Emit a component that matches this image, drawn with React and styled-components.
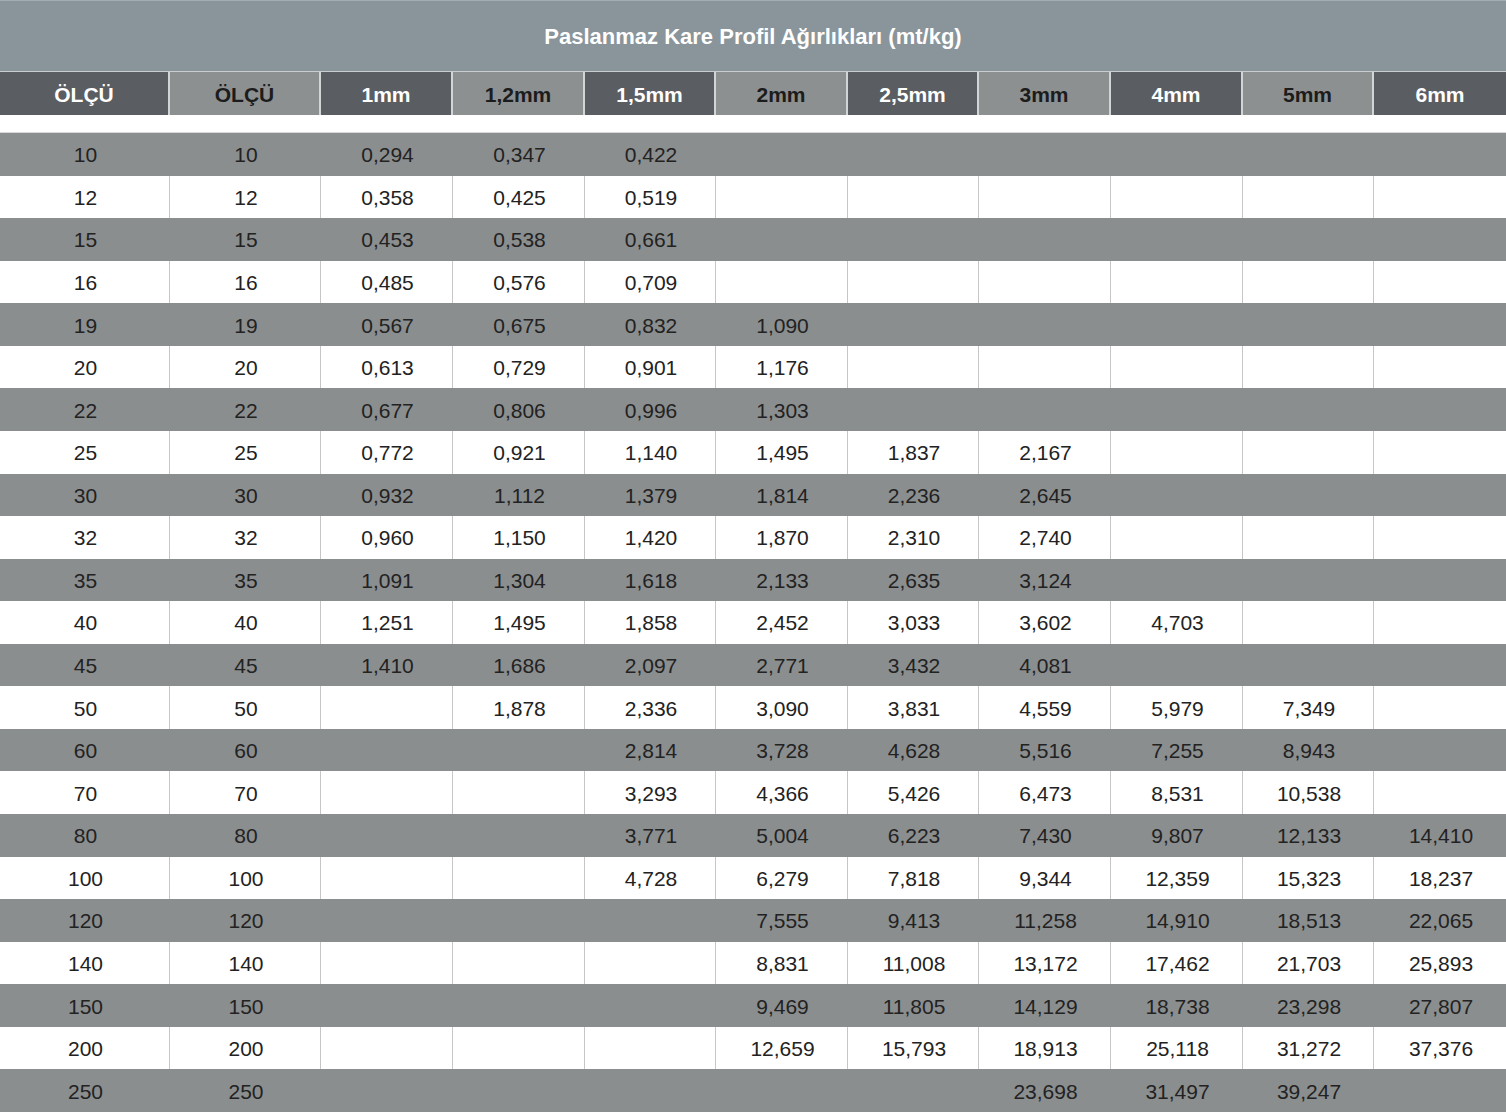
import React from "react";
import styled, { createGlobalStyle } from "styled-components";

const GlobalStyle = createGlobalStyle`
  html, body {
    margin: 0;
    padding: 0;
    background: #fff;
  }
  body {
    font-family: "Liberation Sans", Arial, Helvetica, sans-serif;
  }
`;

const COLS = "170px 151px 132px 132px 131px 132px 131px 132px 132px 131px 132px";

const Page = styled.div`
  width: 1506px;
  height: 1112px;
  display: flex;
  flex-direction: column;
  overflow: hidden;
`;

const Title = styled.div`
  height: 72px;
  background: #89959b;
  border-top: 1px solid #a3adb2;
  border-bottom: 1px solid #c9cdd0;
  box-sizing: border-box;
  display: flex;
  align-items: center;
  justify-content: center;
  color: #fff;
  font-weight: bold;
  font-size: 22px;
  padding-top: 1px;
`;

const HeaderRow = styled.div`
  display: grid;
  grid-template-columns: ${COLS};
  height: 43px;
`;

const HeadCell = styled.div`
  background: ${(p) => (p.$dark ? "#5a5d61" : "#8d9091")};
  color: ${(p) => (p.$dark ? "#fff" : "#1c1c1c")};
  font-weight: bold;
  font-size: 21px;
  display: flex;
  align-items: center;
  justify-content: center;
  padding-top: 2px;
  border-right: 2px solid #d2d4d5;
  box-sizing: border-box;
  &:last-child {
    border-right: none;
  }
`;

const Spacer = styled.div`
  height: 17px;
  border-bottom: 1px solid #d9d9d9;
`;

const Body = styled.div`
  flex: 1;
  display: grid;
  grid-template-rows: repeat(23, 1fr);
`;

const Row = styled.div`
  display: grid;
  grid-template-columns: ${COLS};
  background: ${(p) => (p.$gray ? "#8b8e8f" : "#fff")};
`;

const Cell = styled.div`
  display: flex;
  align-items: center;
  justify-content: center;
  font-size: 21px;
  color: #222;
  padding: 2px 0 0 2px;
  box-sizing: border-box;
  border-right: 1px solid ${(p) => (p.$gray ? "transparent" : "#c6c6c6")};
  &:last-child {
    border-right: none;
  }
`;

const headers = ["ÖLÇÜ", "ÖLÇÜ", "1mm", "1,2mm", "1,5mm", "2mm", "2,5mm", "3mm", "4mm", "5mm", "6mm"];

const data = [
  ["10", "10", "0,294", "0,347", "0,422"],
  ["12", "12", "0,358", "0,425", "0,519"],
  ["15", "15", "0,453", "0,538", "0,661"],
  ["16", "16", "0,485", "0,576", "0,709"],
  ["19", "19", "0,567", "0,675", "0,832", "1,090"],
  ["20", "20", "0,613", "0,729", "0,901", "1,176"],
  ["22", "22", "0,677", "0,806", "0,996", "1,303"],
  ["25", "25", "0,772", "0,921", "1,140", "1,495", "1,837", "2,167"],
  ["30", "30", "0,932", "1,112", "1,379", "1,814", "2,236", "2,645"],
  ["32", "32", "0,960", "1,150", "1,420", "1,870", "2,310", "2,740"],
  ["35", "35", "1,091", "1,304", "1,618", "2,133", "2,635", "3,124"],
  ["40", "40", "1,251", "1,495", "1,858", "2,452", "3,033", "3,602", "4,703"],
  ["45", "45", "1,410", "1,686", "2,097", "2,771", "3,432", "4,081"],
  ["50", "50", "", "1,878", "2,336", "3,090", "3,831", "4,559", "5,979", "7,349"],
  ["60", "60", "", "", "2,814", "3,728", "4,628", "5,516", "7,255", "8,943"],
  ["70", "70", "", "", "3,293", "4,366", "5,426", "6,473", "8,531", "10,538"],
  ["80", "80", "", "", "3,771", "5,004", "6,223", "7,430", "9,807", "12,133", "14,410"],
  ["100", "100", "", "", "4,728", "6,279", "7,818", "9,344", "12,359", "15,323", "18,237"],
  ["120", "120", "", "", "", "7,555", "9,413", "11,258", "14,910", "18,513", "22,065"],
  ["140", "140", "", "", "", "8,831", "11,008", "13,172", "17,462", "21,703", "25,893"],
  ["150", "150", "", "", "", "9,469", "11,805", "14,129", "18,738", "23,298", "27,807"],
  ["200", "200", "", "", "", "12,659", "15,793", "18,913", "25,118", "31,272", "37,376"],
  ["250", "250", "", "", "", "", "", "23,698", "31,497", "39,247", ""],
];

const App = () => {
  return (
    <Page>
      <GlobalStyle />
      <Title>Paslanmaz Kare Profil Ağırlıkları (mt/kg)</Title>
      <HeaderRow>
        {headers.map((h, i) => (
          <HeadCell key={i} $dark={i % 2 === 0}>
            {h}
          </HeadCell>
        ))}
      </HeaderRow>
      <Spacer />
      <Body>
        {data.map((row, r) => {
          const gray = r % 2 === 0;
          return (
            <Row key={r} $gray={gray}>
              {headers.map((_, c) => (
                <Cell key={c} $gray={gray}>
                  {row[c] || ""}
                </Cell>
              ))}
            </Row>
          );
        })}
      </Body>
    </Page>
  );
};

export default App;
